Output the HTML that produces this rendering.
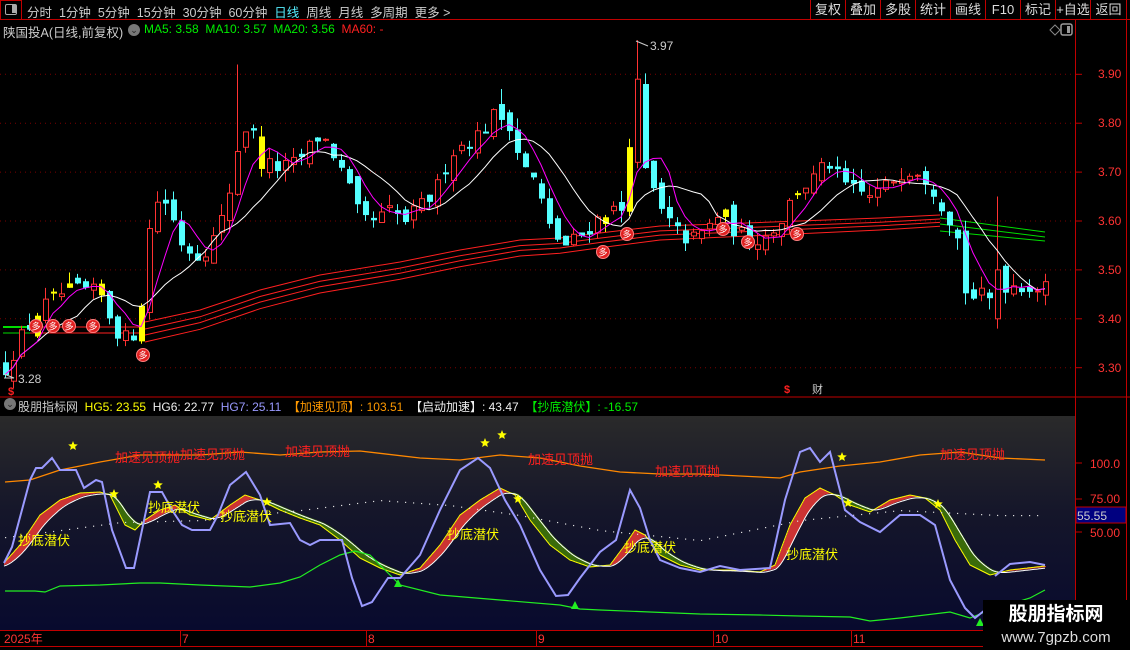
<!DOCTYPE html>
<html><head><meta charset="utf-8">
<style>
*{margin:0;padding:0;box-sizing:border-box}
body{width:1130px;height:650px;background:#000;overflow:hidden;position:relative;font-family:"Liberation Sans","Noto Sans CJK SC",sans-serif;color:#ccc}
.a{position:absolute;white-space:nowrap}
#tb{position:absolute;left:0;top:0;width:1130px;height:20px;border-bottom:1px solid #c00000;font-size:12.5px}
.btn{position:absolute;top:0;height:19px;border-left:1px solid #c00000;color:#ddd;font-size:13px;line-height:19px;text-align:center}
</style></head><body>
<div id="tb">
 <div class="a" style="left:0;top:0;width:22px;height:20px;border:1px solid #c00000"></div>
 <div class="a" style="left:5px;top:4px;width:12px;height:11px;border:1.5px solid #aaa;border-radius:2px"><div style="position:absolute;right:0;top:0;width:4px;height:8px;background:#aaa"></div></div>
 <div class="a" style="left:27px;top:2px;color:#ccc">分时&nbsp;&nbsp;1分钟&nbsp;&nbsp;5分钟&nbsp;&nbsp;15分钟&nbsp;&nbsp;30分钟&nbsp;&nbsp;60分钟&nbsp;&nbsp;<span style="color:#5ef">日线</span>&nbsp;&nbsp;周线&nbsp;&nbsp;月线&nbsp;&nbsp;多周期&nbsp;&nbsp;更多 &gt;</div>
 <div class="btn" style="left:810px;width:35px">复权</div>
 <div class="btn" style="left:845px;width:35px">叠加</div>
 <div class="btn" style="left:880px;width:35px">多股</div>
 <div class="btn" style="left:915px;width:35px">统计</div>
 <div class="btn" style="left:950px;width:35px">画线</div>
 <div class="btn" style="left:985px;width:35px">F10</div>
 <div class="btn" style="left:1020px;width:35px">标记</div>
 <div class="btn" style="left:1055px;width:35px">+自选</div>
 <div class="btn" style="left:1090px;width:37px;border-right:1px solid #c00000">返回</div>
</div>
<div class="a" style="left:3px;top:22px;font-size:12.5px;color:#ccc">陕国投A(日线,前复权)</div>
<div class="a" style="left:128px;top:24px;width:12px;height:12px;border-radius:6px;background:#777;color:#222;font-size:9px;line-height:12px;text-align:center">⌄</div>
<div class="a" style="left:144px;top:22px;font-size:12px;color:#00ee00">MA5: 3.58&nbsp; MA10: 3.57&nbsp; MA20: 3.56&nbsp; <span style="color:#ff2020">MA60: -</span></div>
<div class="a" style="left:4px;top:398px;width:12px;height:12px;border-radius:6px;background:#777;color:#222;font-size:9px;line-height:12px;text-align:center">⌄</div>
<div class="a" style="left:18px;top:398px;font-size:12px;color:#ccc">股朋指标网&nbsp; <span style="color:#ffff00">HG5: 23.55</span>&nbsp; <span style="color:#eee">HG6: 22.77</span>&nbsp; <span style="color:#9a9aff">HG7: 25.11</span>&nbsp; <span style="color:#ff9900">【加速见顶】: 103.51</span>&nbsp; <span style="color:#eee">【启动加速】: 43.47</span>&nbsp; <span style="color:#00ee00">【抄底潜伏】: -16.57</span></div>

<svg id="svgroot" width="1130" height="650" style="position:absolute;left:0;top:0" xmlns="http://www.w3.org/2000/svg" font-family="Liberation Sans,Noto Sans CJK SC,sans-serif">
<defs><linearGradient id="g" x1="0" y1="0" x2="0" y2="1"><stop offset="0" stop-color="#2a2a2a"/><stop offset="0.45" stop-color="#15162a"/><stop offset="1" stop-color="#080a2e"/></linearGradient></defs>
<rect x="0" y="416" width="1075" height="214" fill="url(#g)"/>
<line x1="0" y1="397" x2="1130" y2="397" stroke="#c00000"/>
<line x1="1075.5" y1="20" x2="1075.5" y2="630" stroke="#c00000"/>
<line x1="1126.5" y1="20" x2="1126.5" y2="650" stroke="#c00000"/>
<line x1="0" y1="630.5" x2="1130" y2="630.5" stroke="#c00000"/>
<line x1="0" y1="646.5" x2="983" y2="646.5" stroke="#c00000"/>
<g id="grid"></g>
<g id="bands"></g>
<g id="cand"></g>
<g id="low"></g>
<g id="over"></g>
<text x="1098" y="78" fill="#ff3333" font-size="12">3.90</text>
<text x="1098" y="127" fill="#ff3333" font-size="12">3.80</text>
<text x="1098" y="176" fill="#ff3333" font-size="12">3.70</text>
<text x="1098" y="225" fill="#ff3333" font-size="12">3.60</text>
<text x="1098" y="274" fill="#ff3333" font-size="12">3.50</text>
<text x="1098" y="323" fill="#ff3333" font-size="12">3.40</text>
<text x="1098" y="372" fill="#ff3333" font-size="12">3.30</text>
<text x="1090" y="468" fill="#ff3333" font-size="12">100.0</text>
<text x="1090" y="503" fill="#ff3333" font-size="12">75.00</text>
<rect x="1076" y="507" width="50" height="16" fill="#000080" stroke="#c00000"/>
<text x="1077" y="520" fill="#ccc" font-size="12">55.55</text>
<text x="1090" y="537" fill="#ff3333" font-size="12">50.00</text>
<text x="4" y="643" fill="#ff3333" font-size="12">2025年</text>
<text x="182" y="643" fill="#ff3333" font-size="12">7</text>
<text x="368" y="643" fill="#ff3333" font-size="12">8</text>
<text x="538" y="643" fill="#ff3333" font-size="12">9</text>
<text x="715" y="643" fill="#ff3333" font-size="12">10</text>
<text x="853" y="643" fill="#ff3333" font-size="12">11</text>
<g stroke="#c00000"><line x1="180.5" y1="630" x2="180.5" y2="646"/><line x1="366.5" y1="630" x2="366.5" y2="646"/><line x1="536.5" y1="630" x2="536.5" y2="646"/><line x1="713.5" y1="630" x2="713.5" y2="646"/><line x1="851.5" y1="630" x2="851.5" y2="646"/></g>
<text x="650" y="50" fill="#ccc" font-size="12">3.97</text>
<polyline points="636,41 648,46" stroke="#ccc" fill="none"/>
<text x="18" y="383" fill="#ccc" font-size="12">3.28</text>
<polyline points="4,374 14,378 4,378" stroke="#ccc" fill="none"/>
<text x="8" y="395" fill="#ff2020" font-size="11" font-weight="bold">$</text>
<text x="784" y="393" fill="#ff2020" font-size="11" font-weight="bold">$</text>
<text x="812" y="393" fill="#ccc" font-size="11">财</text>
<path d="M1050 30 l5 -5 l5 5 l-5 5 z" stroke="#888" fill="none"/>
<rect x="1061" y="24" width="11" height="11" rx="2" stroke="#999" stroke-width="1.5" fill="none"/><rect x="1067" y="26" width="3" height="7" fill="#999"/>
<rect x="983" y="600" width="147" height="50" fill="#000"/>
<text x="1056" y="620" fill="#fff" font-size="19" font-weight="bold" text-anchor="middle">股朋指标网</text>
<text x="1056" y="642" fill="#ddd" font-size="15" text-anchor="middle">www.7gpzb.com</text>
</svg>
<script>
(function(){
var NS="http://www.w3.org/2000/svg";
function el(p,t,a,txt){var e=document.createElementNS(NS,t);for(var k in a)e.setAttribute(k,a[k]);if(txt)e.textContent=txt;document.getElementById(p).appendChild(e);return e;}
function interp(pts,x){if(x<=pts[0][0])return pts[0][1];for(var i=1;i<pts.length;i++){if(x<=pts[i][0]){var a=pts[i-1],b=pts[i];return a[1]+(b[1]-a[1])*(x-a[0])/(b[0]-a[0]);}}return pts[pts.length-1][1];}
function py(p){return 74.3+(3.90-p)*489;}
[3.9,3.8,3.7,3.6,3.5,3.4,3.3].forEach(function(p){el("grid","line",{x1:0,x2:1075,y1:py(p),y2:py(p),stroke:"#7a0000","stroke-dasharray":"1,4"});el("grid","line",{x1:1075,x2:1082,y1:py(p),y2:py(p),stroke:"#c00000"});});
[463,499,532].forEach(function(y){el("grid","line",{x1:1075,x2:1082,y1:y,y2:y,stroke:"#c00000"});});
var kp=[[5,3.30],[20,3.36],[40,3.42],[60,3.45],[80,3.46],[100,3.45],[115,3.38],[130,3.35],[140,3.42],[150,3.60],[160,3.66],[170,3.62],[180,3.56],[195,3.53],[210,3.55],[225,3.62],[240,3.78],[250,3.80],[260,3.72],[275,3.71],[290,3.71],[305,3.74],[320,3.78],[335,3.73],[350,3.66],[360,3.60],[375,3.60],[390,3.62],[405,3.60],[420,3.63],[435,3.66],[450,3.74],[465,3.76],[480,3.78],[495,3.82],[510,3.80],[520,3.72],[535,3.68],[550,3.58],[565,3.55],[580,3.57],[595,3.60],[610,3.63],[620,3.60],[632,3.88],[640,3.72],[650,3.68],[660,3.62],[675,3.58],[690,3.56],[705,3.58],[720,3.62],[735,3.58],[750,3.56],[765,3.57],[780,3.60],[795,3.66],[810,3.68],[828,3.72],[840,3.68],[855,3.66],[870,3.65],[885,3.67],[900,3.70],[915,3.71],[930,3.68],[945,3.62],[955,3.59],[965,3.46],[975,3.44],[985,3.45],[995,3.42],[1005,3.47],[1020,3.47],[1045,3.46]];
var sd=12345;function rnd(){sd=(sd*16807)%2147483647;return sd/2147483647;}
function pl(g,pts,c,w){el(g,"polyline",{points:pts.map(function(p){return p[0].toFixed(1)+","+p[1].toFixed(1)}).join(" "),stroke:c,"stroke-width":w||1,fill:"none"});}
var b1=[[145,322],[200,310],[260,290],[320,275],[400,262],[460,250],[520,240],[560,238],[600,233],[660,226],[720,224],[800,221],[880,218],[940,215]];
[0,7,13,20].forEach(function(o){pl("bands",b1.map(function(p,i){return [p[0],p[1]+o*(1-i/30)]}),"#ff2020",1);});
pl("bands",[[940,218],[1045,232]],"#00dd00");pl("bands",[[940,224],[1045,237]],"#00dd00");pl("bands",[[940,231],[1045,241]],"#00dd00");
pl("bands",[[3,327],[30,327]],"#00dd00",2);pl("bands",[[3,333],[30,333]],"#00dd00",1);
pl("bands",[[30,327],[145,327]],"#ff2020",1);pl("bands",[[30,333],[145,333]],"#ff2020",1);
var yel=[36,52,68,100,140,604,628,724,796,260];
var closes=[],xs=[],prev=3.30;
for(var i=0;i<131;i++){var x=5+i*8;var c=interp(kp,x)+(rnd()-0.5)*0.035;var o=prev+(rnd()-0.5)*0.03;
 if(x==629){o=3.62;c=3.75;}if(x==637){o=3.72;c=3.89;}
 var h=Math.max(o,c)+rnd()*0.025,l=Math.min(o,c)-rnd()*0.025;
 if(x==237)h=3.92;if(x==637)h=3.97;if(x==501)h=3.87;if(x==997){h=3.65;l=3.38;o=3.40;c=3.50;}if(x==5)l=3.28;
 var col=c>=o?"#ff3232":"#54ffff",fill=c>=o?"#000":"#54ffff";
 for(var j=0;j<yel.length;j++)if(Math.abs(x-yel[j])<4){col="#ffff00";fill="#ffff00";}
 var ty=py(Math.max(o,c)),by=py(Math.min(o,c));if(by-ty<1)by=ty+1;
 el("cand","line",{x1:x+0.5,x2:x+0.5,y1:py(h),y2:ty,stroke:col});el("cand","line",{x1:x+0.5,x2:x+0.5,y1:by,y2:py(l),stroke:col});
 el("cand","rect",{x:x-1.5,y:ty,width:5,height:by-ty,fill:fill,stroke:col});
 closes.push(c);xs.push(x);prev=c;}
function ma(n){var r=[];for(var i=0;i<closes.length;i++){var a=0,k=0;for(var j=Math.max(0,i-n+1);j<=i;j++){a+=closes[j];k++;}r.push([xs[i],py(a/k)]);}return r;}
pl("cand",ma(10),"#ffffff",1);pl("cand",ma(5),"#ff00ff",1);
[[36,326],[53,326],[69,326],[93,326],[143,355],[603,252],[627,234],[723,229],[748,242],[797,234]].forEach(function(p){el("over","circle",{cx:p[0],cy:p[1],r:6.5,fill:"#e02020",stroke:"#ff8080"});el("over","text",{x:p[0],y:p[1]+3.5,"font-size":9,fill:"#fff","text-anchor":"middle"},"多");});
var mid=[[4,563],[20,545],[40,515],[60,500],[80,493],[100,492],[110,495],[125,525],[135,530],[145,520],[160,510],[175,505],[190,515],[210,520],[230,505],[245,495],[260,500],[280,510],[300,518],[320,525],[340,540],[360,558],[380,568],[400,575],[420,568],[440,545],[460,515],[480,500],[500,488],[515,495],[530,520],[550,545],[570,560],[590,567],[610,565],[625,545],[635,530],[645,535],[660,555],[680,565],[700,570],[730,570],[760,572],[775,565],[790,525],[805,498],[820,488],[835,495],[850,505],[870,512],[890,500],[910,495],[925,498],[940,510],[955,540],[970,565],[990,575],[1010,570],[1045,566]];
var ema=null,fp=[],sp=[];
for(var x2=4;x2<=1045;x2++){var v=interp(mid,x2);ema=ema==null?v+2:ema+(v-ema)*0.09;
 var cc=v<ema?"#cc3333":"#3a6b0a";el("low","line",{x1:x2+0.5,x2:x2+0.5,y1:Math.min(v,ema),y2:Math.max(v,ema),stroke:cc});fp.push([x2,v]);sp.push([x2,ema+1]);}
pl("low",fp,"#ffff00",1);pl("low",sp,"#ffffff",1);
var dot=[[5,537],[60,530],[120,522],[200,520],[300,510],[380,500],[450,505],[520,515],[600,530],[700,540],[800,520],[900,510],[1000,515],[1045,515]];
for(var x3=5;x3<1045;x3+=8)el("low","rect",{x:x3,y:interp(dot,x3),width:1.2,height:1.2,fill:"#ddd"});
pl("low",[[5,482],[30,480],[60,470],[100,462],[140,455],[200,455],[240,452],[280,455],[320,452],[360,451],[420,458],[460,460],[500,455],[540,458],[580,466],[620,472],[660,474],[700,474],[740,476],[780,478],[800,472],[840,466],[880,462],[920,455],[960,452],[1000,458],[1045,460]],"#ff8800",1.3);
pl("low",[[5,591],[35,591],[45,592],[60,586],[100,585],[140,583],[160,583],[200,585],[250,587],[280,583],[300,577],[320,565],[340,555],[355,551],[370,555],[385,570],[400,585],[440,595],[500,600],[560,605],[580,609],[600,610],[650,612],[700,614],[760,615],[800,616],[850,617],[870,621],[900,618],[950,612],[970,618],[990,610],[1030,598],[1045,590]],"#22ee22",1.2);
pl("low",[[4,563],[12,547],[30,480],[36,468],[42,468],[52,458],[60,470],[76,470],[84,488],[96,480],[102,482],[112,530],[126,568],[134,568],[150,492],[162,492],[172,510],[182,525],[192,530],[210,530],[218,515],[230,485],[246,472],[260,495],[270,525],[290,523],[300,540],[310,545],[320,540],[342,540],[352,578],[362,606],[372,602],[388,578],[400,578],[420,555],[440,510],[460,470],[478,458],[490,468],[505,500],[520,525],[540,570],[556,596],[568,595],[580,578],[600,552],[616,540],[630,490],[640,508],[650,540],[660,560],[680,568],[700,572],[720,566],[740,570],[770,568],[785,500],[800,452],[810,448],[820,462],[830,452],[845,510],[860,522],[880,532],[900,515],[920,515],[935,525],[950,580],[965,608],[975,618],[985,610]],"#9a9aff",2);
pl("low",[[995,576],[1010,564],[1030,562],[1045,565]],"#9a9aff",2);
[[115,462],[180,459],[285,456],[528,464],[655,476],[940,459]].forEach(function(p){el("over","text",{x:p[0],y:p[1],fill:"#ff2020","font-size":13},"加速见顶抛");});
[[18,545],[148,512],[220,521],[447,539],[624,552],[786,559]].forEach(function(p){el("over","text",{x:p[0],y:p[1],fill:"#ffff00","font-size":13},"抄底潜伏");});
function star(cx,cy){var pts=[];for(var k=0;k<10;k++){var r=k%2?2.2:5,a=-Math.PI/2+k*Math.PI/5;pts.push((cx+r*Math.cos(a)).toFixed(1)+","+(cy+r*Math.sin(a)).toFixed(1));}el("over","polygon",{points:pts.join(" "),fill:"#ffff00"});}
[[73,446],[114,494],[158,485],[267,502],[485,443],[502,435],[518,499],[842,457],[848,503],[938,504]].forEach(function(p){star(p[0],p[1]);});
[[398,583],[575,605],[980,622]].forEach(function(p){el("over","polygon",{points:(p[0]-4)+","+(p[1]+4)+" "+(p[0]+4)+","+(p[1]+4)+" "+p[0]+","+(p[1]-4),fill:"#22ee22"});});
})();
</script>
</body></html>
